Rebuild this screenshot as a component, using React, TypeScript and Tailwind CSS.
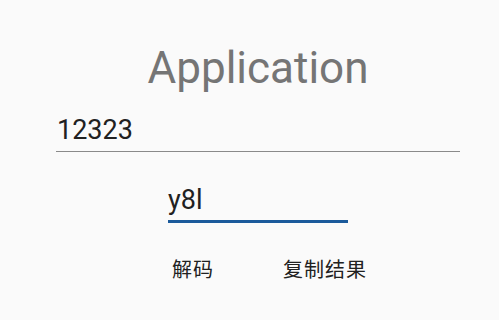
export default function App() {
  return (
    <div className="w-full h-[320px] bg-[#fafafa] font-['Roboto','Noto_Sans_CJK_SC',sans-serif]">
      <div className="pl-[56px] pr-[39px] pt-[42px] flex flex-col">
        {/* Title */}
        <h1 className="text-center text-[44px] leading-[52px] text-[#757575]">Application</h1>

        {/* Input field */}
        <div className="mt-[18px] border-b-[1.5px] border-[#8a8a8a] pb-[3px]">
          <div className="pl-[1px] text-[27px] leading-[36px] text-[#212121]">12323</div>
        </div>

        {/* Result field */}
        <div className="mt-[30px] w-[180px] self-center border-b-[3px] border-[#1b5a9b] pb-[2px]">
          <div className="text-[27px] leading-[36px] text-[#212121]">y8l</div>
        </div>

        {/* Buttons */}
        <div className="mt-[33px] pl-[116px] flex gap-[69px] text-[20px] leading-[28px] tracking-[1px] text-[#212121]">
          <button>解码</button>
          <button>复制结果</button>
        </div>
      </div>
    </div>
  );
}
